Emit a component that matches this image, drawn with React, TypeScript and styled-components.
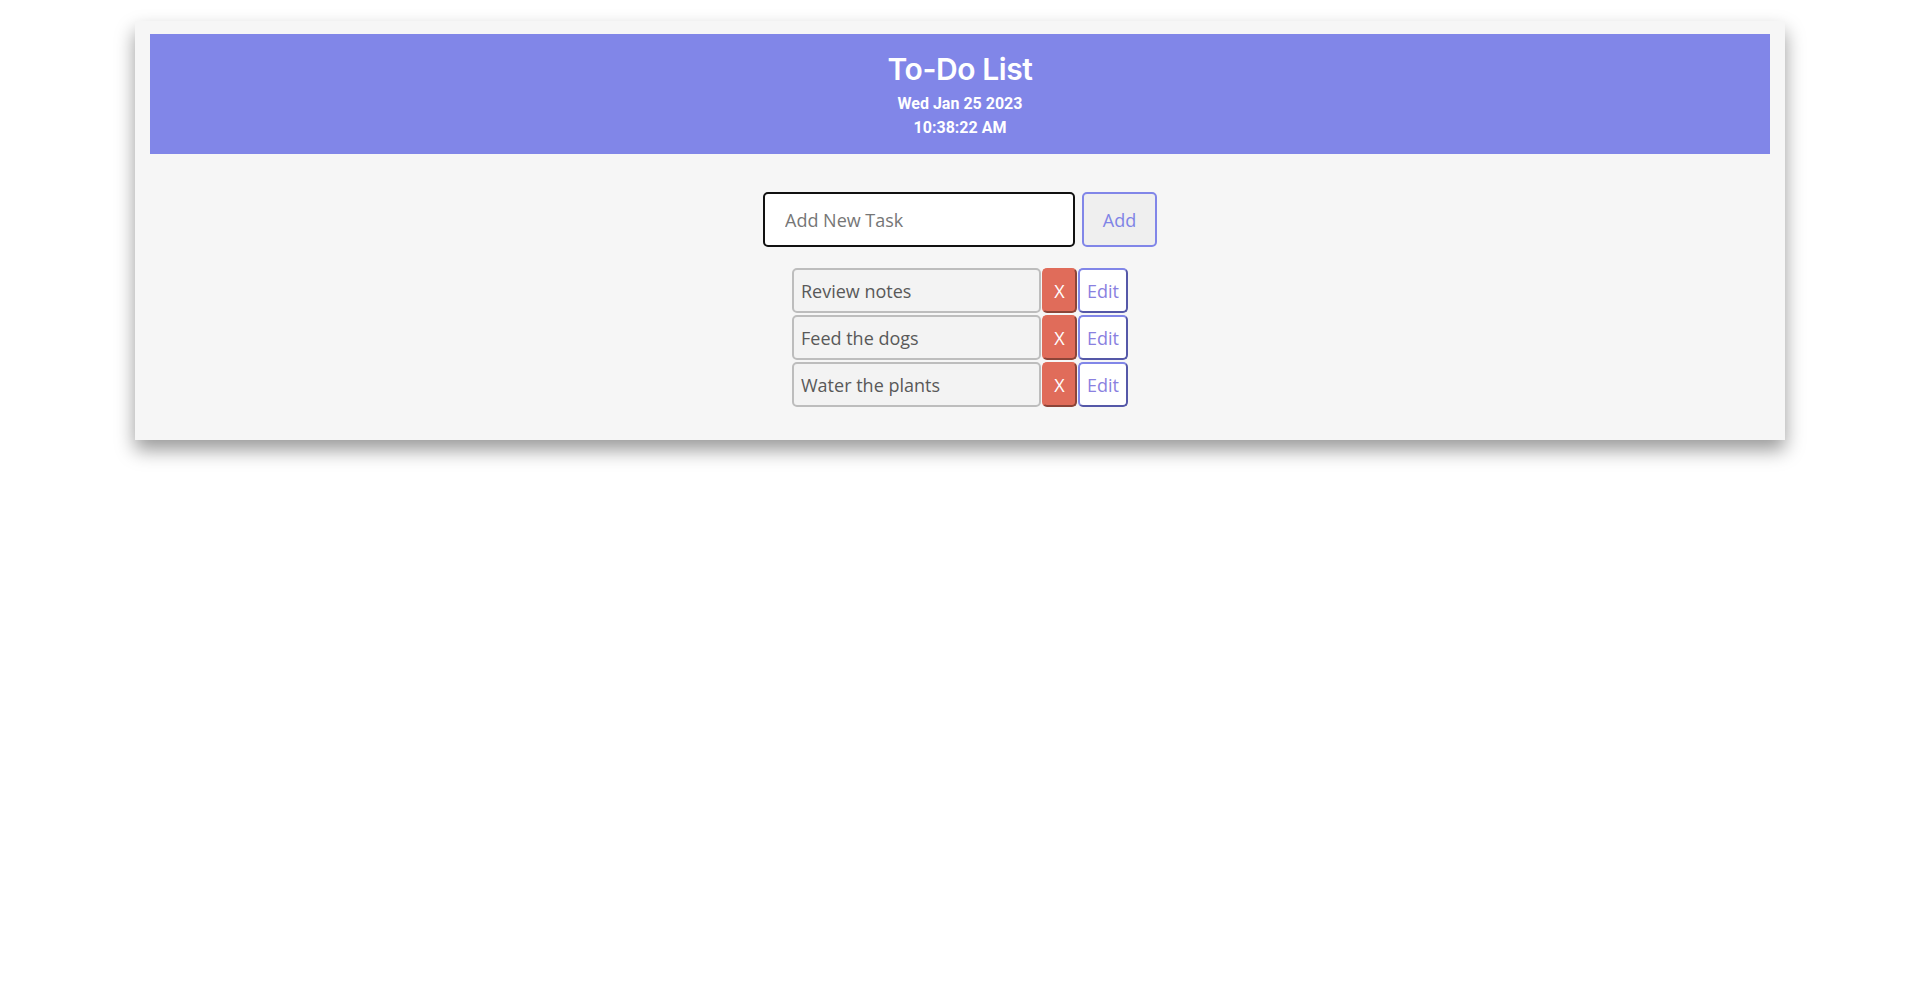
import React, { useState } from 'react';
import styled, { createGlobalStyle } from 'styled-components';

const GlobalStyle = createGlobalStyle`
  body {
    margin: 0;
    background: #ffffff;
    font-family: 'Open Sans', 'Noto Sans', sans-serif;
  }
`;

const Page = styled.div`
  padding-top: 21px;
  padding-bottom: 60px;
  display: flex;
  justify-content: center;
`;

const Card = styled.div`
  width: 1650px;
  box-sizing: border-box;
  padding: 13px 15px 33px;
  background: #f6f6f6;
  box-shadow: 0 10px 18px rgba(0, 0, 0, 0.4);
`;

const Header = styled.header`
  height: 120px;
  box-sizing: border-box;
  padding-top: 17px;
  background: #8186e8;
  color: #ffffff;
  text-align: center;
`;

const Title = styled.h1`
  margin: 0 0 5px;
  font-family: 'Inter', 'Lato', sans-serif;
  font-weight: 600;
  font-size: 30px;
  line-height: 36px;
  letter-spacing: -0.4px;
`;

const Stamp = styled.div`
  font-family: 'Roboto', sans-serif;
  font-weight: 700;
  font-size: 16px;
  line-height: 24px;
`;

const Body = styled.div`
  display: flex;
  flex-direction: column;
  align-items: center;
  padding-top: 38px;
`;

const Form = styled.form`
  display: flex;
  gap: 7px;
  margin-bottom: 21px;
`;

const NewTask = styled.input`
  width: 312px;
  height: 55px;
  box-sizing: border-box;
  padding: 0 20px;
  border: 2px solid #111111;
  border-radius: 5px;
  background: #ffffff;
  font-family: 'Open Sans', 'Noto Sans', sans-serif;
  font-size: 18px;
  color: #333;
  outline: none;

  &::placeholder {
    color: #767676;
  }
`;

const AddButton = styled.button`
  width: 75px;
  height: 55px;
  border: 2px solid #8186e8;
  border-radius: 5px;
  background: #efefef;
  color: #7f84e6;
  font-family: 'Open Sans', 'Noto Sans', sans-serif;
  font-size: 18px;
  cursor: pointer;
`;

const List = styled.ul`
  list-style: none;
  margin: 0;
  padding: 0;
  display: flex;
  flex-direction: column;
  gap: 2px;
`;

const Row = styled.li`
  display: flex;
  height: 45px;
`;

const TaskText = styled.div`
  width: 249px;
  box-sizing: border-box;
  display: flex;
  align-items: center;
  padding: 0 7px;
  border: 2px solid #bdbdbd;
  border-radius: 5px;
  background: #f3f3f3;
  color: #595959;
  font-size: 18px;
`;

const RowButton = styled.button<{ $kind: 'delete' | 'edit' }>`
  width: ${(p) => (p.$kind === 'delete' ? '35px' : '50px')};
  box-sizing: border-box;
  padding: 0;
  margin-left: 1px;
  border: 2px solid;
  border-radius: 5px;
  border-color: ${(p) =>
    p.$kind === 'delete'
      ? '#e06c5a #8c4438 #8c4438 #e06c5a'
      : '#8186e8 #5558a8 #5558a8 #8186e8'};
  background: ${(p) => (p.$kind === 'delete' ? '#e06c5a' : '#ffffff')};
  color: ${(p) => (p.$kind === 'delete' ? '#ffffff' : '#8a80e0')};
  font-family: 'Open Sans', 'Noto Sans', sans-serif;
  font-size: 18px;
  cursor: pointer;
`;

const tasks = ['Review notes', 'Feed the dogs', 'Water the plants'];

export default function App() {
  const [task, setTask] = useState('');

  return (
    <>
      <GlobalStyle />
      <Page>
        <Card>
          <Header>
            <Title>To-Do List</Title>
            <Stamp>Wed Jan 25 2023</Stamp>
            <Stamp>10:38:22 AM</Stamp>
          </Header>
          <Body>
            <Form onSubmit={(e) => e.preventDefault()}>
              <NewTask
                autoFocus
                placeholder="Add New Task"
                value={task}
                onChange={(e) => setTask(e.target.value)}
              />
              <AddButton type="submit">Add</AddButton>
            </Form>
            <List>
              {tasks.map((t) => (
                <Row key={t}>
                  <TaskText>{t}</TaskText>
                  <RowButton $kind="delete">X</RowButton>
                  <RowButton $kind="edit">Edit</RowButton>
                </Row>
              ))}
            </List>
          </Body>
        </Card>
      </Page>
    </>
  );
}
